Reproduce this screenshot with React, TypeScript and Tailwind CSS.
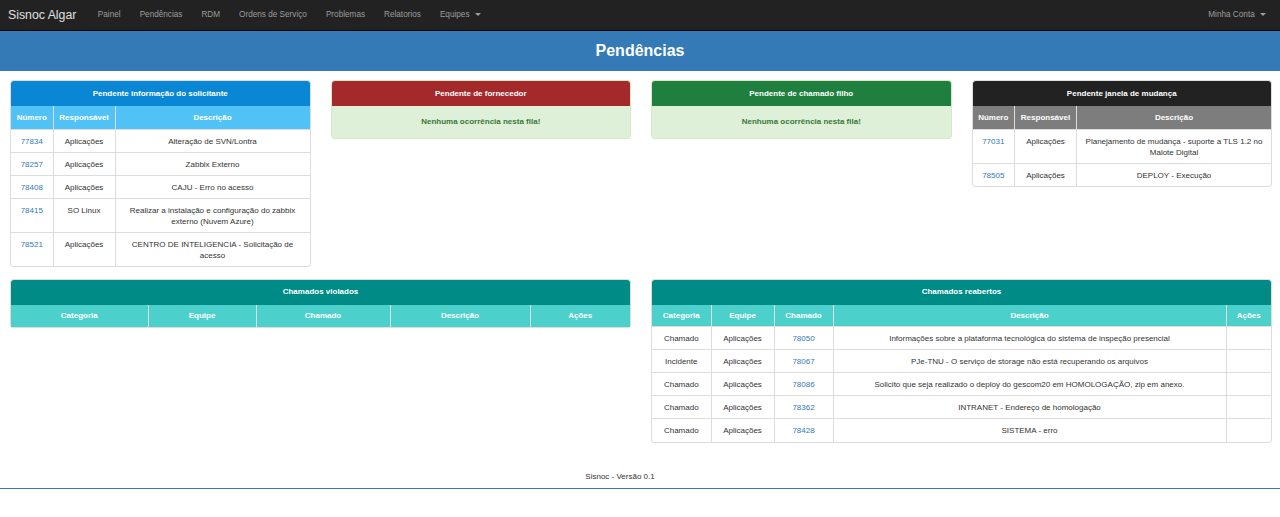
import { ReactNode } from "react";

type Row = { num: string; resp: string; desc: ReactNode };

const solicitante: Row[] = [
  { num: "77834", resp: "Aplicações", desc: "Alteração de SVN/Lontra" },
  { num: "78257", resp: "Aplicações", desc: "Zabbix Externo" },
  { num: "78408", resp: "Aplicações", desc: "CAJU - Erro no acesso" },
  { num: "78415", resp: "SO Linux", desc: "Realizar a instalação e configuração do zabbix externo (Nuvem Azure)" },
  { num: "78521", resp: "Aplicações", desc: "CENTRO DE INTELIGENCIA - Solicitação de acesso" },
];

const mudanca: Row[] = [
  { num: "77031", resp: "Aplicações", desc: "Planejamento de mudança - suporte a TLS 1.2 no Malote Digital" },
  { num: "78505", resp: "Aplicações", desc: "DEPLOY - Execução" },
];

const reabertos = [
  ["Chamado", "Aplicações", "78050", "Informações sobre a plataforma tecnológica do sistema de inspeção presencial"],
  ["Incidente", "Aplicações", "78067", "PJe-TNU - O serviço de storage não está recuperando os arquivos"],
  ["Chamado", "Aplicações", "78086", "Solicito que seja realizado o deploy do gescom20 em HOMOLOGAÇÃO, zip em anexo."],
  ["Chamado", "Aplicações", "78362", "INTRANET - Endereço de homologação"],
  ["Chamado", "Aplicações", "78428", "SISTEMA - erro"],
];

const navLinks = ["Painel", "Pendências", "RDM", "Ordens de Serviço", "Problemas", "Relatorios"];

function Caret() {
  return <span className="ml-[3px] inline-block border-x-[3px] border-t-[3px] border-x-transparent border-t-[#9d9d9d] align-middle" />;
}

function Heading({ bg, children }: { bg: string; children: ReactNode }) {
  return (
    <div className={`${bg} flex h-[25px] items-center justify-center rounded-t-[3px] text-[8px] font-bold text-white`}>
      {children}
    </div>
  );
}

function Empty({ title, bg }: { title: string; bg: string }) {
  return (
    <div className="rounded-[3px] border border-[#d6e9c6]">
      <Heading bg={bg}>{title}</Heading>
      <div className="flex h-[32px] items-center justify-center bg-[#dff0d8] text-[8px] font-bold text-[#3c763d]">
        Nenhuma ocorrência nesta fila!
      </div>
    </div>
  );
}

function PendTable({ title, bg, thBg, rows }: { title: string; bg: string; thBg: string; rows: Row[] }) {
  return (
    <div className="rounded-[3px] border border-[#ddd]">
      <Heading bg={bg}>{title}</Heading>
      <table className="w-full table-fixed border-collapse text-center text-[8px] leading-[11px] text-[#333]">
        <thead>
          <tr className={`${thBg} h-[23px] text-white`}>
            <th className="w-[42px] border-r border-[#ddd] font-bold">Número</th>
            <th className="w-[62px] border-r border-[#ddd] font-bold">Responsável</th>
            <th className="font-bold">Descrição</th>
          </tr>
        </thead>
        <tbody>
          {rows.map((r) => (
            <tr key={r.num} className="border-t border-[#ddd] align-top">
              <td className="border-r border-[#ddd] pt-[6px] pb-[5px] text-[#337ab7]">{r.num}</td>
              <td className="border-r border-[#ddd] pt-[6px] pb-[5px]">{r.resp}</td>
              <td className="px-[7px] pt-[6px] pb-[5px]">{r.desc}</td>
            </tr>
          ))}
        </tbody>
      </table>
    </div>
  );
}

function Chamados({ title, widths, rows }: { title: string; widths: string[]; rows: string[][] }) {
  const heads = ["Categoria", "Equipe", "Chamado", "Descrição", "Ações"];
  return (
    <div className="rounded-[3px] border border-[#ddd]">
      <Heading bg="bg-[#008b87]">{title}</Heading>
      <table className="w-full table-fixed border-collapse text-center text-[8px] leading-[11px] text-[#333]">
        <thead>
          <tr className="h-[22px] bg-[#4cd0cb] text-white">
            {heads.map((h, i) => (
              <th key={h} className={`${widths[i]} border-r border-[#ddd] font-bold last:border-r-0`}>
                {h}
              </th>
            ))}
          </tr>
        </thead>
        <tbody>
          {rows.map((r) => (
            <tr key={r[2]} className="h-[23px] border-t border-[#ddd]">
              <td className="border-r border-[#ddd]">{r[0]}</td>
              <td className="border-r border-[#ddd]">{r[1]}</td>
              <td className="border-r border-[#ddd] text-[#337ab7]">{r[2]}</td>
              <td className="border-r border-[#ddd]">{r[3]}</td>
              <td />
            </tr>
          ))}
        </tbody>
      </table>
    </div>
  );
}

export default function App() {
  return (
    <div className="min-h-[517px] overflow-hidden bg-white font-['Liberation_Sans',Arial,sans-serif]">
      <nav className="flex h-[31px] items-center border-b border-[#080808] bg-[#222] pl-[8px] pr-[14px]">
        <span className="mr-[12px] text-[12.3px] text-[#e0e0e0]">Sisnoc Algar</span>
        {navLinks.map((l) => (
          <span key={l} className="px-[9.5px] text-[8.2px] text-[#9d9d9d]">{l}</span>
        ))}
        <span className="px-[9.5px] text-[8.2px] text-[#9d9d9d]">
          Equipes <Caret />
        </span>
        <span className="ml-auto text-[8.2px] text-[#9d9d9d]">
          Minha Conta <Caret />
        </span>
      </nav>
      <div className="flex h-[40px] items-center justify-center bg-[#337ab7] text-[16px] font-bold text-white">
        Pendências
      </div>
      <div className="w-[1282px]">
        <div className="grid grid-cols-4 pt-[9px]">
          <div className="px-[10px]">
            <PendTable title="Pendente informação do solicitante" bg="bg-[#0a87d4]" thBg="bg-[#50c2f6]" rows={solicitante} />
          </div>
          <div className="px-[10px]">
            <Empty title="Pendente de fornecedor" bg="bg-[#a4292a]" />
          </div>
          <div className="px-[10px]">
            <Empty title="Pendente de chamado filho" bg="bg-[#1e7f3e]" />
          </div>
          <div className="px-[10px]">
            <PendTable title="Pendente janela de mudança" bg="bg-[#222]" thBg="bg-[#7d7d7d]" rows={mudanca} />
          </div>
        </div>
        <div className="mt-[12px] grid grid-cols-2">
          <div className="px-[10px]">
            <Chamados
              title="Chamados violados"
              widths={["w-[137px]", "w-[108px]", "w-[134px]", "w-[140px]", ""]}
              rows={[]}
            />
          </div>
          <div className="px-[10px]">
            <Chamados
              title="Chamados reabertos"
              widths={["w-[59px]", "w-[63px]", "w-[59px]", "", "w-[45px]"]}
              rows={reabertos}
            />
          </div>
        </div>
      </div>
      <footer className="mt-[28px] pr-[40px] text-center text-[8px] text-[#333]">Sisnoc - Versão 0.1</footer>
      <div className="mt-[5px] h-px bg-[#337ab7]" />
    </div>
  );
}
